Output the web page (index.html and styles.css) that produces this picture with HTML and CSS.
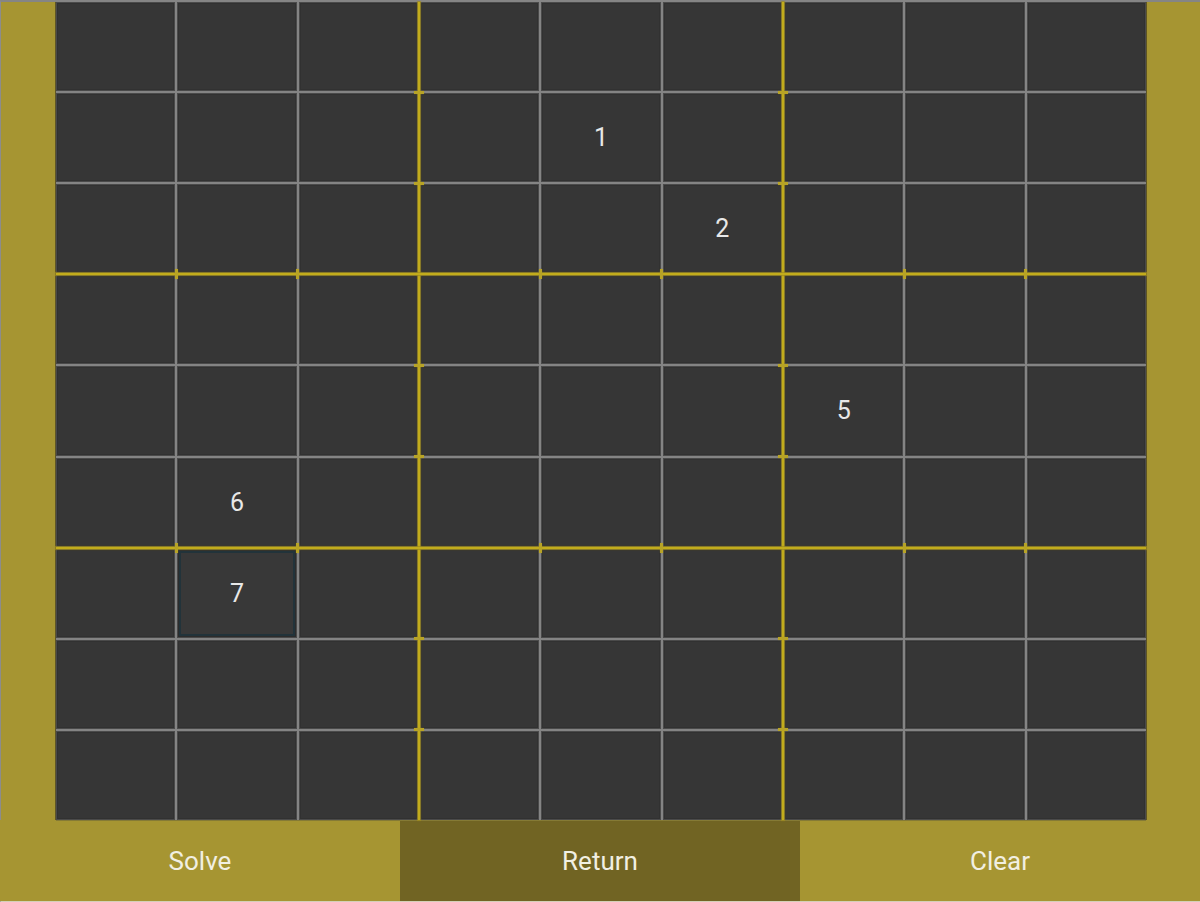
FILE: index.html
```html
<!DOCTYPE html>
<html>
<head>
<meta charset="utf-8">
<link rel="stylesheet" href="styles.css">
</head>
<body>
<div class="app">
  <div class="board-area">
    <div class="board">
      <div class="cell"></div><div class="cell"></div><div class="cell"></div><div class="cell"></div><div class="cell"></div><div class="cell"></div><div class="cell"></div><div class="cell"></div><div class="cell"></div>
      <div class="cell"></div><div class="cell"></div><div class="cell"></div><div class="cell"></div><div class="cell">1</div><div class="cell"></div><div class="cell"></div><div class="cell"></div><div class="cell"></div>
      <div class="cell"></div><div class="cell"></div><div class="cell"></div><div class="cell"></div><div class="cell"></div><div class="cell">2</div><div class="cell"></div><div class="cell"></div><div class="cell"></div>
      <div class="cell"></div><div class="cell"></div><div class="cell"></div><div class="cell"></div><div class="cell"></div><div class="cell"></div><div class="cell"></div><div class="cell"></div><div class="cell"></div>
      <div class="cell"></div><div class="cell"></div><div class="cell"></div><div class="cell"></div><div class="cell"></div><div class="cell"></div><div class="cell">5</div><div class="cell"></div><div class="cell"></div>
      <div class="cell"></div><div class="cell">6</div><div class="cell"></div><div class="cell"></div><div class="cell"></div><div class="cell"></div><div class="cell"></div><div class="cell"></div><div class="cell"></div>
      <div class="cell"></div><div class="cell selected">7</div><div class="cell"></div><div class="cell"></div><div class="cell"></div><div class="cell"></div><div class="cell"></div><div class="cell"></div><div class="cell"></div>
      <div class="cell"></div><div class="cell"></div><div class="cell"></div><div class="cell"></div><div class="cell"></div><div class="cell"></div><div class="cell"></div><div class="cell"></div><div class="cell"></div>
      <div class="cell"></div><div class="cell"></div><div class="cell"></div><div class="cell"></div><div class="cell"></div><div class="cell"></div><div class="cell"></div><div class="cell"></div><div class="cell"></div>

      <div class="yline v c3"></div>
      <div class="yline v c6"></div>
      <div class="yline h r3"></div>
      <div class="yline h r6"></div>

      <div class="tick th c3 r1"></div><div class="tick th c3 r2"></div><div class="tick th c3 r4"></div><div class="tick th c3 r5"></div><div class="tick th c3 r7"></div><div class="tick th c3 r8"></div>
      <div class="tick th c6 r1"></div><div class="tick th c6 r2"></div><div class="tick th c6 r4"></div><div class="tick th c6 r5"></div><div class="tick th c6 r7"></div><div class="tick th c6 r8"></div>
      <div class="tick tv r3 c1"></div><div class="tick tv r3 c2"></div><div class="tick tv r3 c4"></div><div class="tick tv r3 c5"></div><div class="tick tv r3 c7"></div><div class="tick tv r3 c8"></div>
      <div class="tick tv r6 c1"></div><div class="tick tv r6 c2"></div><div class="tick tv r6 c4"></div><div class="tick tv r6 c5"></div><div class="tick tv r6 c7"></div><div class="tick tv r6 c8"></div>
    </div>
  </div>
  <div class="buttons">
    <div class="btn">Solve</div>
    <div class="btn active">Return</div>
    <div class="btn">Clear</div>
  </div>
</div>
</body>
</html>
```

FILE: styles.css
```css
* { box-sizing: border-box; }
html, body { margin: 0; padding: 0; }
body {
  width: 1200px;
  height: 902px;
  overflow: hidden;
  background: #a69532;
  font-family: Roboto, "Noto Sans", sans-serif;
}
.app {
  width: 1200px;
  height: 902px;
  display: flex;
  flex-direction: column;
  border-top: 2px solid #858585;
  border-left: 1px solid #8c8c8c;
  border-bottom: 1px solid #d4d0b8;
}
.board-area {
  height: 818px;
  padding-left: 55px;
  flex: none;
}
.board {
  position: relative;
  width: 1090px;
  height: 818px;
  display: grid;
  grid-template-columns: repeat(9, 1fr);
  grid-template-rows: repeat(9, 1fr);
  gap: 2px;
  background: #848484;
  box-shadow: -1px 0 0 #5e5526, 1px 0 0 #5e5526, 0 1px 0 #857a35;
}
.cell {
  background: #363636;
  box-shadow: inset 0 0 0 1px #4a4a4a, inset 0 0 0 2px #313131;
  color: #e8e8e8;
  font-size: 25px;
  display: flex;
  align-items: center;
  justify-content: center;
}
.cell.selected {
  background: #383838;
  box-shadow: inset 0 0 0 1px #4a4a4a, inset 0 0 0 2px #2c2c2c, inset 0 0 0 4px #22333a;
}
.yline {
  position: absolute;
  background: #c2ac1c;
  box-shadow: 0 0 1px 1px rgba(160, 140, 30, 0.8);
}
.yline.v { top: 0; bottom: 0; width: 2px; }
.yline.h { left: 0; right: 0; height: 2px; }
.yline.v.c3 { left: 362px; }
.yline.v.c6 { left: 726px; }
.yline.h.r3 { top: 271.33px; }
.yline.h.r6 { top: 544.67px; }

.tick {
  position: absolute;
  background: #b7a326;
  box-shadow: 0 0 1px rgba(176, 158, 40, 0.9);
}
.tick.th { width: 10px; height: 3px; margin-left: -5px; margin-top: -1.5px; }
.tick.tv { width: 3px; height: 10px; margin-left: -1.5px; margin-top: -5px; }
.tick.th.c3 { left: 363px; }
.tick.th.c6 { left: 727px; }
.tick.th.r1 { top: 90.11px; }
.tick.th.r2 { top: 181.22px; }
.tick.th.r4 { top: 363.44px; }
.tick.th.r5 { top: 454.56px; }
.tick.th.r7 { top: 636.78px; }
.tick.th.r8 { top: 727.89px; }
.tick.tv.r3 { top: 272.33px; }
.tick.tv.r6 { top: 545.67px; }
.tick.tv.c1 { left: 120.33px; }
.tick.tv.c2 { left: 241.67px; }
.tick.tv.c4 { left: 484.33px; }
.tick.tv.c5 { left: 605.67px; }
.tick.tv.c7 { left: 848.33px; }
.tick.tv.c8 { left: 969.67px; }

.buttons {
  flex: 1;
  display: flex;
  margin-left: -1px;
}
.btn {
  flex: 1;
  display: flex;
  align-items: center;
  justify-content: center;
  color: #f1efe2;
  font-size: 26px;
  padding-top: 1px;
  background: #a69532;
}
.btn.active { background: #716423; }
```
